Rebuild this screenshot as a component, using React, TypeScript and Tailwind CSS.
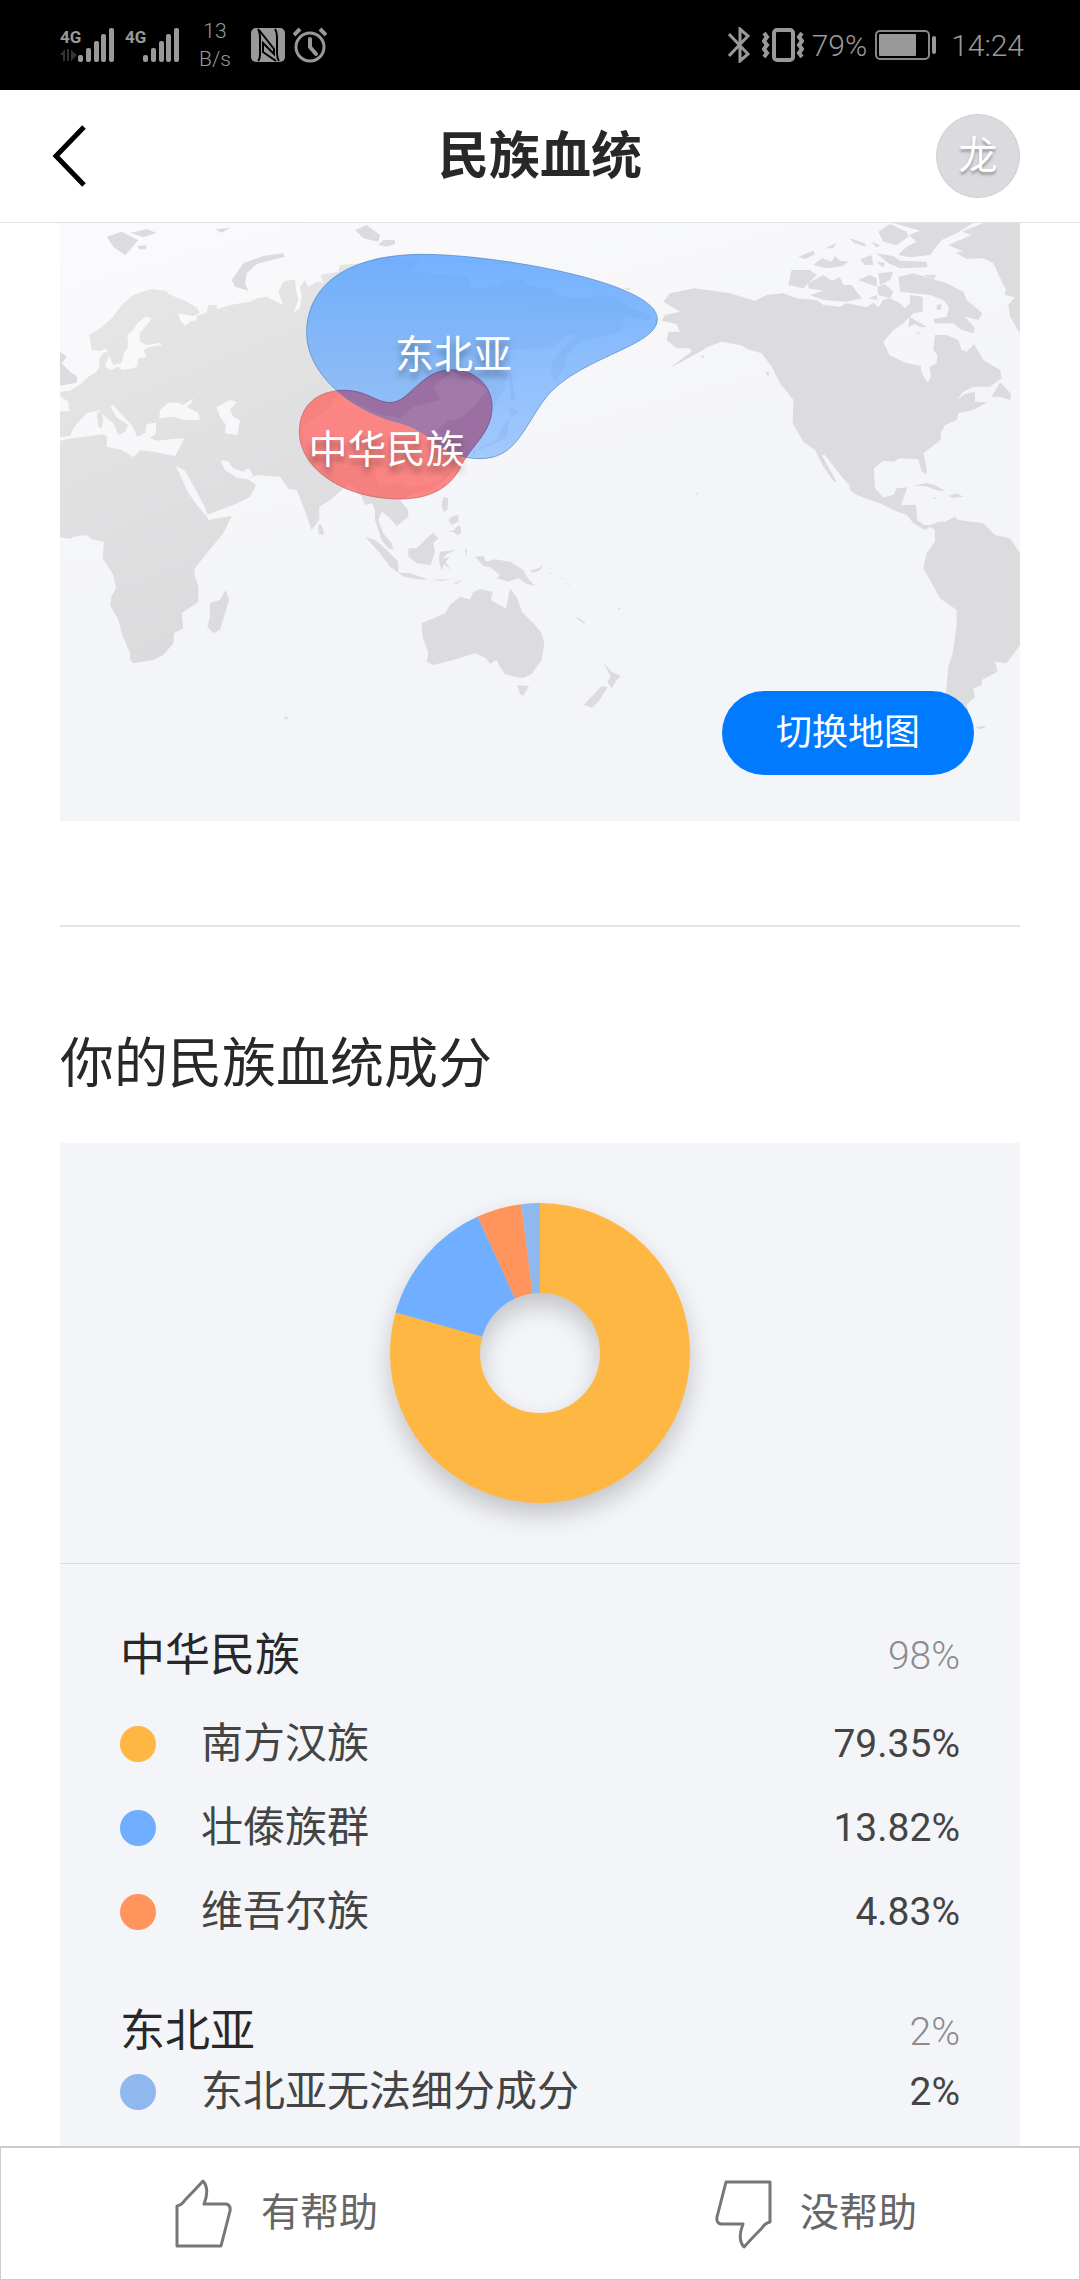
import React from 'react';

interface Part {
  name: string;
  value: number;
  color: string;
}

interface Group {
  name: string;
  percent: string;
  parts: Part[];
  headClass: string;
  listClass: string;
}

const groups: Group[] = [
  {
    name: '中华民族',
    percent: '98%',
    headClass: '',
    listClass: 'mt-10',
    parts: [
      { name: '南方汉族', value: 79.35, color: '#ffb743' },
      { name: '壮傣族群', value: 13.82, color: '#70aeff' },
      { name: '维吾尔族', value: 4.83, color: '#ff955d' },
    ],
  },
  {
    name: '东北亚',
    percent: '2%',
    headClass: 'mt-18',
    listClass: 'mt-3',
    parts: [{ name: '东北亚无法细分成分', value: 2, color: '#8fb9ee' }],
  },
];

const blueArea =
  'M770 340C770 190 900 103 1120 103C1330 103 1822 185 1822 297C1822 380 1590 410 1490 530C1420 620 1400 716 1290 716C1170 716 1150 630 1040 606C900 570 770 460 770 340Z';
const redArea =
  'M748 635C748 550 810 510 885 511C950 512 980 548 1020 548C1080 548 1110 450 1205 450C1280 450 1326 500 1326 560C1326 640 1260 680 1235 735C1200 810 1130 837 1050 837C880 837 748 745 748 635Z';

const eurasia =
  'M30 515L60 512L95 490L115 470L140 455L148 440L148 415L160 397L180 398L172 420L165 440L182 450L205 440L215 450L240 447L262 440L265 415L290 412L280 390L300 380L335 376L330 368L290 376L270 365L268 340L290 315L305 295L285 290L262 310L250 330L232 345L235 380L222 400L215 428L190 435L180 415L168 385L150 393L125 390L118 345L155 322L185 295L215 255L250 225L300 207L350 212L355 222L400 240L440 262L450 278L430 288L385 280L390 300L405 318L420 305L440 300L440 287L470 278L475 255L500 255L500 268L540 255L600 245L620 235L650 230L700 255L685 215L700 185L735 178L738 210L745 240L730 280L750 265L755 230L750 200L765 180L775 200L800 185L820 188L812 165L865 155L870 135L930 130L990 112L1050 110L1115 125L1080 150L1130 160L1225 165L1255 170L1260 205L1280 205L1355 190L1360 178L1420 180L1430 195L1500 205L1535 230L1625 235L1640 225L1690 230L1750 265L1812 290L1790 302L1755 295L1730 290L1720 310L1715 335L1650 350L1600 365L1570 380L1550 410L1545 440L1515 485L1502 460L1505 430L1535 390L1575 350L1575 342L1545 350L1530 365L1500 385L1460 385L1372 390L1345 420L1372 460L1362 510L1335 555L1310 575L1290 600L1262 640L1235 635L1225 600L1190 602L1162 640L1190 680L1225 700L1215 745L1185 780L1140 810L1085 825L1050 840L1075 870L1075 890L1040 918L1020 895L995 875L985 900L1000 940L1025 970L1030 990L1015 985L995 960L985 930L975 900L975 870L965 850L945 855L935 830L920 810L900 790L875 810L840 840L808 860L808 900L785 930L760 860L740 810L715 806L690 770L620 765L590 775L618 795L600 830L550 855L470 885L475 900L545 888L520 940L470 1000L435 1045L432 1060L445 1100L445 1145L395 1180L400 1225L372 1240L370 1270L340 1305L310 1320L250 1330L240 1318L240 1300L215 1240L205 1200L180 1155L184 1130L198 1105L190 1065L158 1015L162 965L125 958L110 945L70 950L62 957L30 952Z';

const americas =
  'M1840 245L1860 220L1935 205L2040 220L2115 242L2150 225L2200 220L2240 235L2300 240L2320 255L2370 260L2390 250L2450 262L2470 248L2485 262L2500 240L2520 235L2550 250L2565 265L2580 250L2580 225L2618 230L2618 275L2590 280L2560 310L2530 330L2500 365L2518 405L2570 430L2612 437L2615 460L2633 487L2643 470L2638 440L2660 430L2662 405L2650 390L2655 345L2690 345L2725 360L2735 390L2750 395L2772 372L2800 420L2850 450L2855 475L2820 500L2770 500L2740 515L2720 540L2745 522L2775 515L2775 545L2812 547L2770 570L2725 580L2720 600L2685 615L2672 640L2672 660L2620 700L2630 745L2630 763L2615 755L2605 718L2550 715L2530 725L2500 722L2472 745L2475 805L2500 832L2530 825L2540 805L2572 802L2553 855L2598 855L2602 900L2622 915L2640 915L2668 905L2685 905L2715 890L2725 900L2800 910L2835 945L2880 955L2910 1000V1275L2870 1330L2835 1325L2843 1355L2795 1380L2795 1395L2770 1405L2775 1430L2750 1455L2755 1475L2700 1450L2688 1420L2695 1340L2708 1300L2720 1220L2720 1170L2670 1135L2640 1080L2620 1045L2630 1000L2655 965L2655 930L2640 920L2625 930L2590 910L2570 885L2530 870L2495 852L2420 825L2400 810L2398 795L2375 770L2325 705L2315 705L2360 785L2352 785L2320 740L2295 690L2260 665L2228 610L2230 540L2190 490L2165 440L2135 400L2100 390L2070 375L2015 365L1975 380L1950 395L1890 428L1858 445L1925 395L1920 385L1880 385L1850 360L1855 335L1890 335L1880 312L1835 302L1845 285L1870 280L1890 275Z';

// islands and lesser land masses
const islands = [
  'M30 395L50 410L35 430L60 455L82 470L80 488L30 497Z',
  'M170 50L215 35L265 60L240 90L225 105L190 80Z',
  'M240 38L290 28L320 38L280 52Z',
  'M262 78L290 76L288 88L268 88Z',
  'M495 28L540 24L515 38Z',
  'M545 180L580 130L640 108L700 100L705 110L620 132L590 160L585 190L595 212L555 200Z',
  'M915 30L950 15L990 45L985 65L940 55Z',
  'M985 75L1000 60L1035 60L1035 72L1010 80Z',
  'M480 1150L510 1140L527 1110L537 1140L510 1230L490 1240L472 1220L480 1190Z',
  'M805 915L813 912L822 935L820 945L805 942Z',
  'M945 950L975 960L1010 990L1045 1025L1045 1058L1020 1040L990 1000Z',
  'M1045 1058L1080 1060L1130 1076L1120 1080L1060 1070Z',
  'M1145 1079L1200 1078L1170 1084ZM1205 1095L1235 1078L1225 1090Z',
  'M1075 985L1100 985L1130 955L1150 938L1165 955L1150 970L1155 995L1142 1035L1100 1030L1075 1010Z',
  'M1170 995L1220 990L1190 1002L1180 1015L1200 1012L1186 1025L1204 1052L1182 1032L1175 1052L1166 1020Z',
  'M1180 830L1195 835L1192 870L1180 875L1175 855Z',
  'M1195 900L1205 890L1225 885L1225 905L1205 915Z',
  'M1195 935L1212 930L1225 915L1233 922V940L1222 946L1210 936Z',
  'M1245 985L1252 990L1248 1010Z',
  'M1275 1010L1300 1008L1308 1025L1335 1018L1380 1025L1420 1050L1430 1070L1455 1098L1430 1092L1405 1075L1375 1085L1340 1075L1350 1065L1320 1042L1300 1038Z',
  'M1440 1052L1465 1045L1478 1035L1470 1050L1450 1058Z',
  'M1498 1056L1506 1062L1500 1062ZM1530 1070L1545 1078L1536 1076ZM1545 1086L1562 1098L1552 1094Z',
  'M1115 1210L1185 1180L1200 1155L1230 1130L1260 1138L1270 1115L1290 1108L1328 1115L1322 1140L1368 1165L1380 1105L1402 1135L1415 1175L1450 1210L1475 1240L1483 1270L1475 1320L1445 1362L1420 1374L1400 1372L1365 1362L1350 1340L1340 1320L1320 1332L1308 1315L1275 1300L1210 1320L1150 1335L1130 1325L1135 1300L1118 1250Z',
  'M1402 1395L1437 1398L1420 1428L1410 1422Z',
  'M1662 1330L1685 1355L1712 1368L1700 1380L1685 1405L1672 1385L1682 1370Z',
  'M1655 1398L1673 1402L1645 1445L1625 1463L1602 1455L1610 1445Z',
  'M1582 1190L1605 1208L1603 1212L1582 1196Z',
  'M1702 1166L1712 1162L1710 1169ZM1718 1156L1728 1152L1720 1158Z',
  'M1935 818L1945 818L1940 825Z',
  'M702 1490L718 1492L708 1500Z',
  'M1378 450L1390 500L1397 540L1382 545ZM1375 562L1407 575L1382 592ZM1376 597L1372 650L1330 672L1282 692L1292 680L1340 660L1358 620ZM1268 690L1280 692L1272 708Z',
  'M1330 130L1380 122L1400 135ZM1720 203L1742 205L1735 210Z',
  'M1950 410L1965 405L1960 415Z',
  'M2145 455L2158 455L2155 470ZM2190 492L2240 515L2243 530L2215 515Z',
  'M2245 110L2290 92L2295 102L2265 118Z',
  'M2290 135L2315 115L2345 125L2355 108L2370 122L2395 125L2380 138L2330 145Z',
  'M2325 85L2360 68L2350 85ZM2400 55L2445 70L2448 80L2410 68ZM2462 65L2490 75L2480 82Z',
  'M2430 118L2465 105L2470 135L2445 135ZM2480 125L2505 128L2500 143Z',
  'M2225 150L2280 150L2300 165L2260 205L2215 195Z',
  'M2275 190L2320 165L2345 182L2370 172L2380 195L2405 195L2435 235L2390 245L2320 240L2280 225L2320 212L2275 205Z',
  'M2425 180L2460 165L2480 175L2480 200L2450 190ZM2485 160L2530 155L2520 180L2490 195ZM2482 200L2505 192L2530 215L2520 235L2485 225ZM2455 235L2480 225L2482 240Z',
  'M2480 100L2530 108L2550 122L2630 125L2632 142L2550 145L2515 130Z',
  'M2485 35L2520 12L2570 35L2575 50L2540 76L2500 65Z',
  'M2530 9H2770L2720 40L2675 60L2640 105L2580 112L2545 105L2570 80L2600 65L2575 45L2610 32Z',
  'M2695 75L2765 45L2735 35L2800 9H2910V340L2880 290L2875 255L2895 232L2865 225L2868 205L2860 195L2830 130L2800 115L2750 117L2715 97L2740 95Z',
  'M2545 170L2590 160L2640 175L2690 190L2740 215L2750 240L2797 280L2785 300L2745 290L2775 325L2770 340L2735 330L2710 310L2655 310L2650 297L2690 290L2697 262L2680 240L2640 225L2550 215Z',
  'M2620 165L2660 165L2650 178ZM2660 255L2675 252L2672 270L2660 268Z',
  'M2578 290L2630 320L2610 322L2595 312L2575 322ZM2598 338L2612 335L2605 343Z',
  'M2825 530L2850 487L2882 520L2882 540L2845 530Z',
  'M2590 798L2630 788L2660 797L2685 813L2665 812L2625 798Z',
  'M2695 828L2720 820L2740 830L2710 834ZM2650 832L2664 834L2652 836Z',
  'M2775 1522L2800 1518L2808 1522L2790 1528Z',
].join('');

// inland and enclosed seas, drawn over the land
const seas = [
  'M30 662L65 655L160 643L172 650L170 680L215 690L250 712L270 690L310 695L375 708L385 690L402 655L360 658L322 662L300 655L318 640L318 608L290 612L285 640L262 650L245 615L225 595L190 555L182 562L200 592L235 615L225 635L205 645L190 610L165 590L150 570L110 580L70 625L60 648L30 652Z',
  'M328 595L330 570L355 548L385 548L400 555L430 535L425 548L410 560L445 580L450 600L400 600L370 590Z',
  'M500 562L540 540L560 546L540 570L550 590L570 600L562 645L525 640L528 615L510 590Z',
  'M30 528L55 545L58 572L30 575Z',
  'M512 722L532 722L550 745L580 755L595 745L610 765L590 778L560 772L525 750Z',
  'M378 738L405 752L432 800L465 862L475 895L440 855L412 812Z',
].join('');

const china =
  'M865 522L830 570L800 590L755 618L760 650L800 708L860 740L910 745L975 740L985 795L1050 790L1070 800L1110 802L1170 780L1220 735L1225 690L1185 652L1160 632L1195 600L1225 598L1272 560L1312 510L1280 490L1250 470L1205 456L1150 500L1172 540L1090 560L1050 595L980 580L905 545Z';

const WorldMap = () => (
  <svg viewBox="30 9 2880 1794" className="block h-auto w-full" aria-hidden="true">
    <defs>
      <linearGradient id="sea" gradientUnits="userSpaceOnUse" x1="300" y1="0" x2="600" y2="1100">
        <stop offset="0" stopColor="#fafafc" />
        <stop offset="1" stopColor="#f4f5f8" />
      </linearGradient>
      <linearGradient id="land" gradientUnits="userSpaceOnUse" x1="400" y1="0" x2="900" y2="1200">
        <stop offset="0" stopColor="#e7e7e8" />
        <stop offset="1" stopColor="#dadadc" />
      </linearGradient>
      <linearGradient id="blue" x1="0" y1="0" x2="0" y2="1">
        <stop offset="0" stopColor="#5ca4ff" stopOpacity="0.85" />
        <stop offset="1" stopColor="#7ab4fd" stopOpacity="0.68" />
      </linearGradient>
      <clipPath id="blueClip">
        <path d={blueArea} />
      </clipPath>
    </defs>
    <rect x="30" y="9" width="2880" height="1794" fill="url(#sea)" />
    <path d={eurasia} fill="url(#land)" />
    <path d={americas} fill="#dcdcde" />
    <path d={islands} fill="#dcdcde" />
    <path d={seas} fill="url(#sea)" />
    <path d="M140 578L155 572L160 600L155 625L145 620Z" fill="#e2e2e3" />
    <path d={china} fill="#fff" fillOpacity="0.5" />
    <path d={redArea} fill="#ff5855" fillOpacity="0.7" stroke="#b76a70" strokeOpacity="0.7" strokeWidth="3" />
    <path d={blueArea} fill="url(#blue)" stroke="#5686c4" strokeOpacity="0.7" strokeWidth="3" />
    <g clipPath="url(#blueClip)">
      <path d={redArea} fill="#9b6699" fillOpacity="0.86" stroke="#775f9a" strokeWidth="3" />
      <path d={china} fill="#fff" fillOpacity="0.08" />
    </g>
  </svg>
);

const Signal = ({ arrows }: { arrows?: boolean }) => (
  <svg width="54" height="36" viewBox="0 0 54 36" fill="#999">
    <text x="0" y="16" fontFamily="Roboto, sans-serif" fontSize="17" fontWeight="700">4G</text>
    {arrows && <path d="M0 28L5 22V34H3V28ZM7 22H9V34H7ZM11 23L17 28L11 34Z" fill="#333" />}
    <rect x="18" y="28" width="5" height="7" rx="2" />
    <rect x="26" y="21" width="5" height="14" rx="2" />
    <rect x="34" y="14" width="5" height="21" rx="2" />
    <rect x="41" y="7" width="5" height="28" rx="2" />
    <rect x="49" y="1" width="5" height="34" rx="2" />
  </svg>
);

const StatusBar = () => (
  <div className="flex h-[90px] items-center justify-between bg-black pr-14 pl-[60px] text-[#999]">
    <div className="flex items-center">
      <Signal arrows />
      <div className="ml-[11px]">
        <Signal />
      </div>
      <div className="ml-5 text-center text-[21px] leading-7 font-light">
        <div>13</div>
        <div>B/s</div>
      </div>
      <svg className="ml-5" width="34" height="34" viewBox="0 0 34 34">
        <rect width="34" height="34" rx="5" fill="#999" />
        <path d="M7 1Q9 4 9 10V27Q9 31 7 33" fill="none" stroke="#000" strokeWidth="2" />
        <path d="M24 1Q26 4 26 9V24Q26 30 28 33" fill="none" stroke="#000" strokeWidth="2" />
        <path d="M8 2L23 21V26L12 15V24L25 33" fill="none" stroke="#000" strokeWidth="2" />
      </svg>
      <svg className="ml-2" width="34" height="36" viewBox="0 0 34 36" fill="none" stroke="#999">
        <circle cx="17" cy="20" r="14" strokeWidth="3" />
        <path d="M17 12V20L23 27" strokeWidth="4" strokeLinecap="round" strokeLinejoin="round" />
        <path d="M1 8L7 2M33 8L27 2" strokeWidth="4" />
      </svg>
    </div>
    <div className="flex items-center text-[30px] font-light">
      <svg width="22" height="36" viewBox="0 0 22 36" fill="none" stroke="#999" strokeWidth="3">
        <path d="M1 7L20 27L12 34V2L20 9L1 29" />
      </svg>
      <svg className="ml-3" width="42" height="34" viewBox="0 0 42 34" fill="none" stroke="#999">
        <rect x="12" y="2" width="19" height="30" rx="3" strokeWidth="4" />
        <path d="M2 5L5 9L2 13L5 17L2 21L5 25L2 29M40 5L37 9L40 13L37 17L40 21L37 25L40 29" strokeWidth="4" />
      </svg>
      <span className="ml-2">79%</span>
      <svg className="ml-2" width="62" height="30" viewBox="0 0 62 30">
        <rect x="1" y="1" width="53" height="28" rx="4" fill="none" stroke="#888" strokeWidth="2" />
        <rect x="4" y="4" width="37" height="22" rx="1" fill="#999" />
        <rect x="57" y="6" width="4" height="18" rx="2" fill="#999" />
      </svg>
      <span className="ml-[14px]">14:24</span>
    </div>
  </div>
);

const Donut = ({ parts }: { parts: Part[] }) => {
  let start = 0;
  return (
    <svg
      width="300"
      height="300"
      viewBox="0 0 300 300"
      className="overflow-visible drop-shadow-[0_12px_12px_rgba(0,0,0,0.2)]"
      role="img"
      aria-label="民族血统成分"
    >
      <g transform="rotate(-90 150 150)" fill="none" strokeWidth="90">
        {parts.map(part => {
          const offset = -start;
          start += part.value;
          return (
            <circle
              key={part.name}
              cx="150"
              cy="150"
              r="105"
              pathLength={100}
              stroke={part.color}
              strokeDasharray={`${part.value} ${100 - part.value}`}
              strokeDashoffset={offset}
            />
          );
        })}
      </g>
    </svg>
  );
};

const Thumb = ({ down }: { down?: boolean }) => (
  <svg
    width="58"
    height="70"
    viewBox="0 0 58 70"
    className={down ? 'rotate-180' : ''}
    fill="none"
    stroke="#777"
    strokeWidth="3"
    strokeLinejoin="round"
  >
    <path d="M2 67V27Q7 26 10 21Q19 12 28 2Q35 10 29 25H51Q56 26 55 32L46 67Z" />
  </svg>
);

export default function App() {
  const parts = groups.flatMap(g => g.parts);

  return (
    <div className="flex min-h-screen flex-col bg-white font-[Roboto,'Noto_Sans_CJK_SC',sans-serif] text-[#444]">
      <StatusBar />
      <header className="flex h-[133px] items-center justify-between border-b border-[#e3e3e5] pr-[60px] pl-[52px]">
        <button className="flex w-[92px]" aria-label="返回">
          <svg width="34" height="62" viewBox="0 0 34 62" fill="none" stroke="#000" strokeWidth="5">
            <path d="M32 2L4 31L32 60" />
          </svg>
        </button>
        <h1 className="text-[51px] leading-none font-bold text-[#28282a]">民族血统</h1>
        <button className="size-[84px] rounded-full border border-[#cfcfd3] bg-[#dadadf] text-[39px] leading-none text-white [text-shadow:0_3px_3px_rgba(0,0,0,0.3)]">
          龙
        </button>
      </header>

      <main className="flex-1 px-[60px]">
        <section className="relative">
          <WorldMap />
          <span className="absolute top-[22%] left-[41%] -translate-x-1/2 -translate-y-1/2 text-[39px] leading-none whitespace-nowrap text-white [text-shadow:0_6px_6px_rgba(0,0,0,0.35)]">
            东北亚
          </span>
          <span className="absolute top-[38%] left-[34%] -translate-x-1/2 -translate-y-1/2 text-[39px] leading-none whitespace-nowrap text-white [text-shadow:0_6px_6px_rgba(0,0,0,0.35)]">
            中华民族
          </span>
          <button className="absolute right-[46px] bottom-[46px] h-[84px] w-[252px] rounded-full bg-[#007aff] text-[36px] leading-none text-white">
            切换地图
          </button>
        </section>

        <hr className="mt-[104px] border-t-2 border-[#e3e3e6]" />

        <h2 className="mt-[102px] text-[54px] leading-[72px] text-[#28282a]">你的民族血统成分</h2>

        <section className="mt-[42px] bg-[#f4f5f8]">
          <div className="flex justify-center border-b border-[#dcdcde] py-[60px]">
            <Donut parts={parts} />
          </div>
          <div className="px-[60px] pt-[68px] pb-[30px]">
            {groups.map(group => (
              <div key={group.name}>
                <div className={`flex items-center justify-between leading-[48px] ${group.headClass}`}>
                  <h3 className="text-[45px] text-[#28282a]">{group.name}</h3>
                  <span className="text-[39px] font-light text-[#8c8c8c]">{group.percent}</span>
                </div>
                <ul className={`flex flex-col gap-9 ${group.listClass}`}>
                  {group.parts.map(part => (
                    <li key={part.name} className="flex items-center leading-[48px]">
                      <span className="size-9 rounded-full" style={{ backgroundColor: part.color }} />
                      <span className="ml-[45px] text-[42px]">{part.name}</span>
                      <span className="ml-auto text-[39px]">{part.value}%</span>
                    </li>
                  ))}
                </ul>
              </div>
            ))}
          </div>
        </section>
      </main>

      <footer className="sticky bottom-0 flex h-[134px] border border-t-2 border-[#ccc] bg-white text-[39px] text-[#666]">
        <button className="flex flex-1 items-center justify-center gap-7 pl-3">
          <Thumb />
          有帮助
        </button>
        <button className="flex flex-1 items-center justify-center gap-7 pl-3">
          <Thumb down />
          没帮助
        </button>
      </footer>
    </div>
  );
}
